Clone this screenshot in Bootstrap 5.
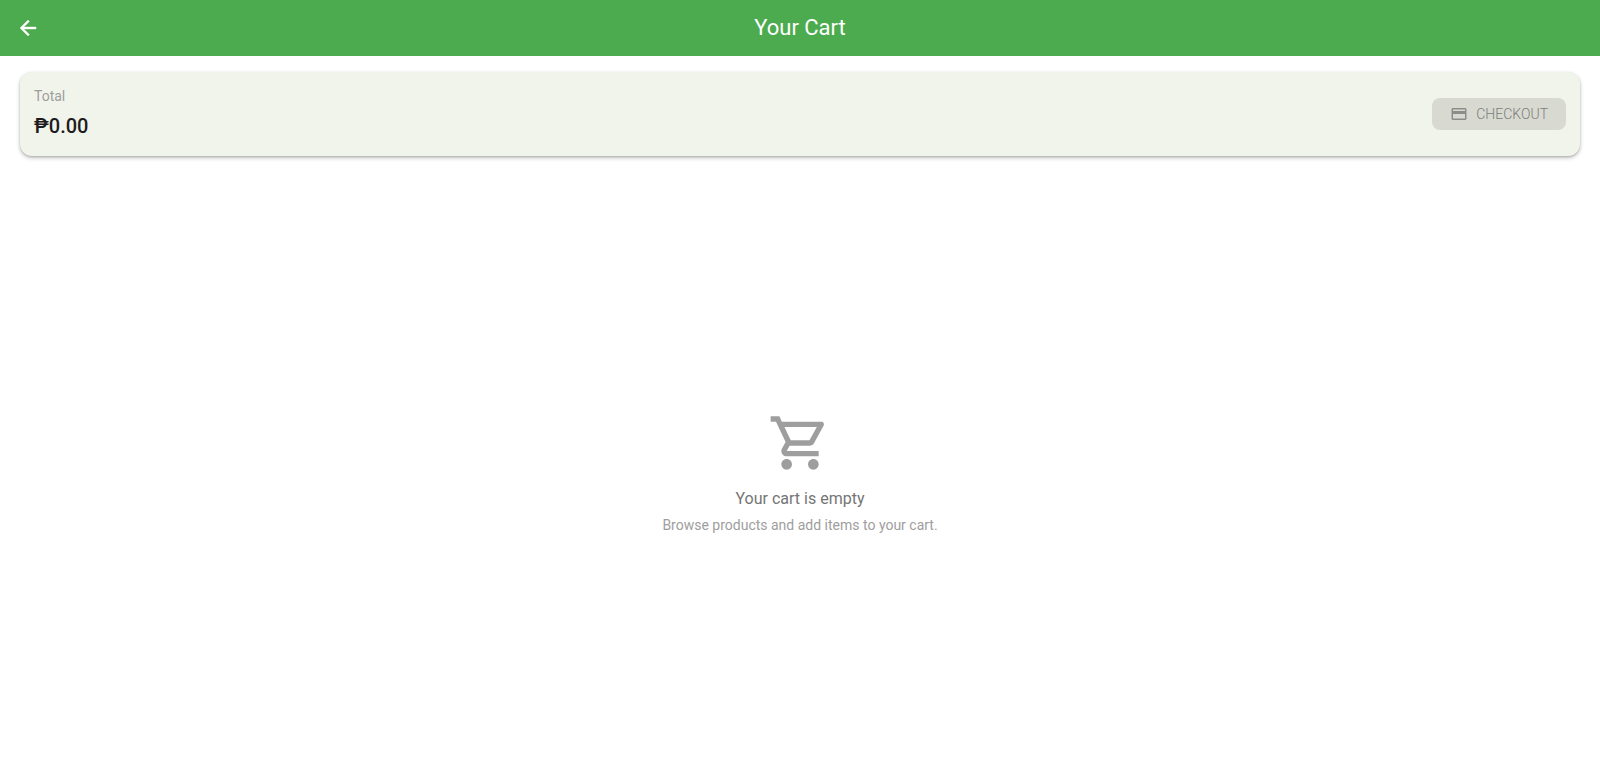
<!DOCTYPE html>
<html lang="en">
<head>
<meta charset="utf-8">
<meta name="viewport" content="width=device-width, initial-scale=1">
<title>Your Cart</title>
<link href="https://cdn.jsdelivr.net/npm/bootstrap@5.3.0/dist/css/bootstrap.min.css" rel="stylesheet">
<style>
body { font-family: Roboto, "Noto Sans", sans-serif; font-size: 14px; line-height: 20px; color: #1d1b20; }
.app-bar { height: 56px; background: #4bab4e; }
.app-bar .side { width: 56px; height: 56px; }
.app-title { font-size: 22px; line-height: 28px; font-weight: 400; }
.summary { margin: 16px 20px; padding: 14px; border-radius: 12px; background: #f1f4ea;
  box-shadow: 0 1px 2px rgba(0,0,0,.16), 0 2px 4px rgba(0,0,0,.22); }
.muted { color: #9e9e9e; }
.amount { font-size: 20px; line-height: 32px; font-weight: 500; }
.btn-checkout, .btn-checkout:disabled { height: 32px; padding: 0 18px; border: 0; border-radius: 8px; font-size: 14px; line-height: 20px;
  font-weight: 300; background: #d8dad2; color: #7b7d79; opacity: 1; }
.btn-checkout svg { color: #8b8d88; }
.empty-icon { margin-bottom: 12px; }
.empty-title { font-size: 16px; line-height: 24px; font-weight: 400; color: #757575; }
</style>
</head>
<body class="d-flex flex-column min-vh-100 bg-white">
<header class="app-bar d-flex align-items-center justify-content-between text-white">
  <a href="#" class="side d-flex align-items-center justify-content-center text-white" aria-label="Back">
    <svg width="24" height="24" viewBox="0 0 24 24" fill="currentColor" stroke="currentColor" stroke-width=".4"><path d="M20 11H7.83l5.59-5.59L12 4l-8 8 8 8 1.41-1.41L7.83 13H20v-2z"/></svg>
  </a>
  <h1 class="app-title m-0">Your Cart</h1>
  <div class="side"></div>
</header>
<section class="summary d-flex align-items-center justify-content-between">
  <div class="d-flex flex-column gap-1">
    <div class="muted">Total</div>
    <div class="amount">₱0.00</div>
  </div>
  <button type="button" class="btn btn-checkout d-flex align-items-center gap-2" disabled>
    <svg width="18" height="18" viewBox="0 0 24 24" fill="currentColor"><path d="M20 4H4c-1.11 0-1.99.89-1.99 2L2 18c0 1.11.89 2 2 2h16c1.11 0 2-.89 2-2V6c0-1.11-.89-2-2-2zm0 14H4v-6h16v6zm0-10H4V6h16v2z"/></svg>
    CHECKOUT
  </button>
</section>
<main class="flex-grow-1 d-flex flex-column align-items-center justify-content-center text-center">
  <svg class="muted empty-icon" width="64" height="64" viewBox="0 0 24 24" fill="currentColor"><path d="M15.55 13c.75 0 1.41-.41 1.75-1.03l3.58-6.49c.37-.66-.11-1.48-.87-1.48H5.21l-.94-2H1v2h2l3.6 7.59-1.35 2.44C4.52 15.37 5.48 17 7 17h12v-2H7l1.1-2h7.45zM6.16 6h12.15l-2.76 5H8.53L6.16 6zM7 18c-1.1 0-1.99.9-1.99 2S5.9 22 7 22s2-.9 2-2-.9-2-2-2zm10 0c-1.1 0-1.99.9-1.99 2s.89 2 1.99 2 2-.9 2-2-.9-2-2-2z"/></svg>
  <h2 class="empty-title mt-0 mb-1">Your cart is empty</h2>
  <p class="muted m-0">Browse products and add items to your cart.</p>
</main>
<script src="https://cdn.jsdelivr.net/npm/bootstrap@5.3.0/dist/js/bootstrap.bundle.min.js"></script>
</body>
</html>
